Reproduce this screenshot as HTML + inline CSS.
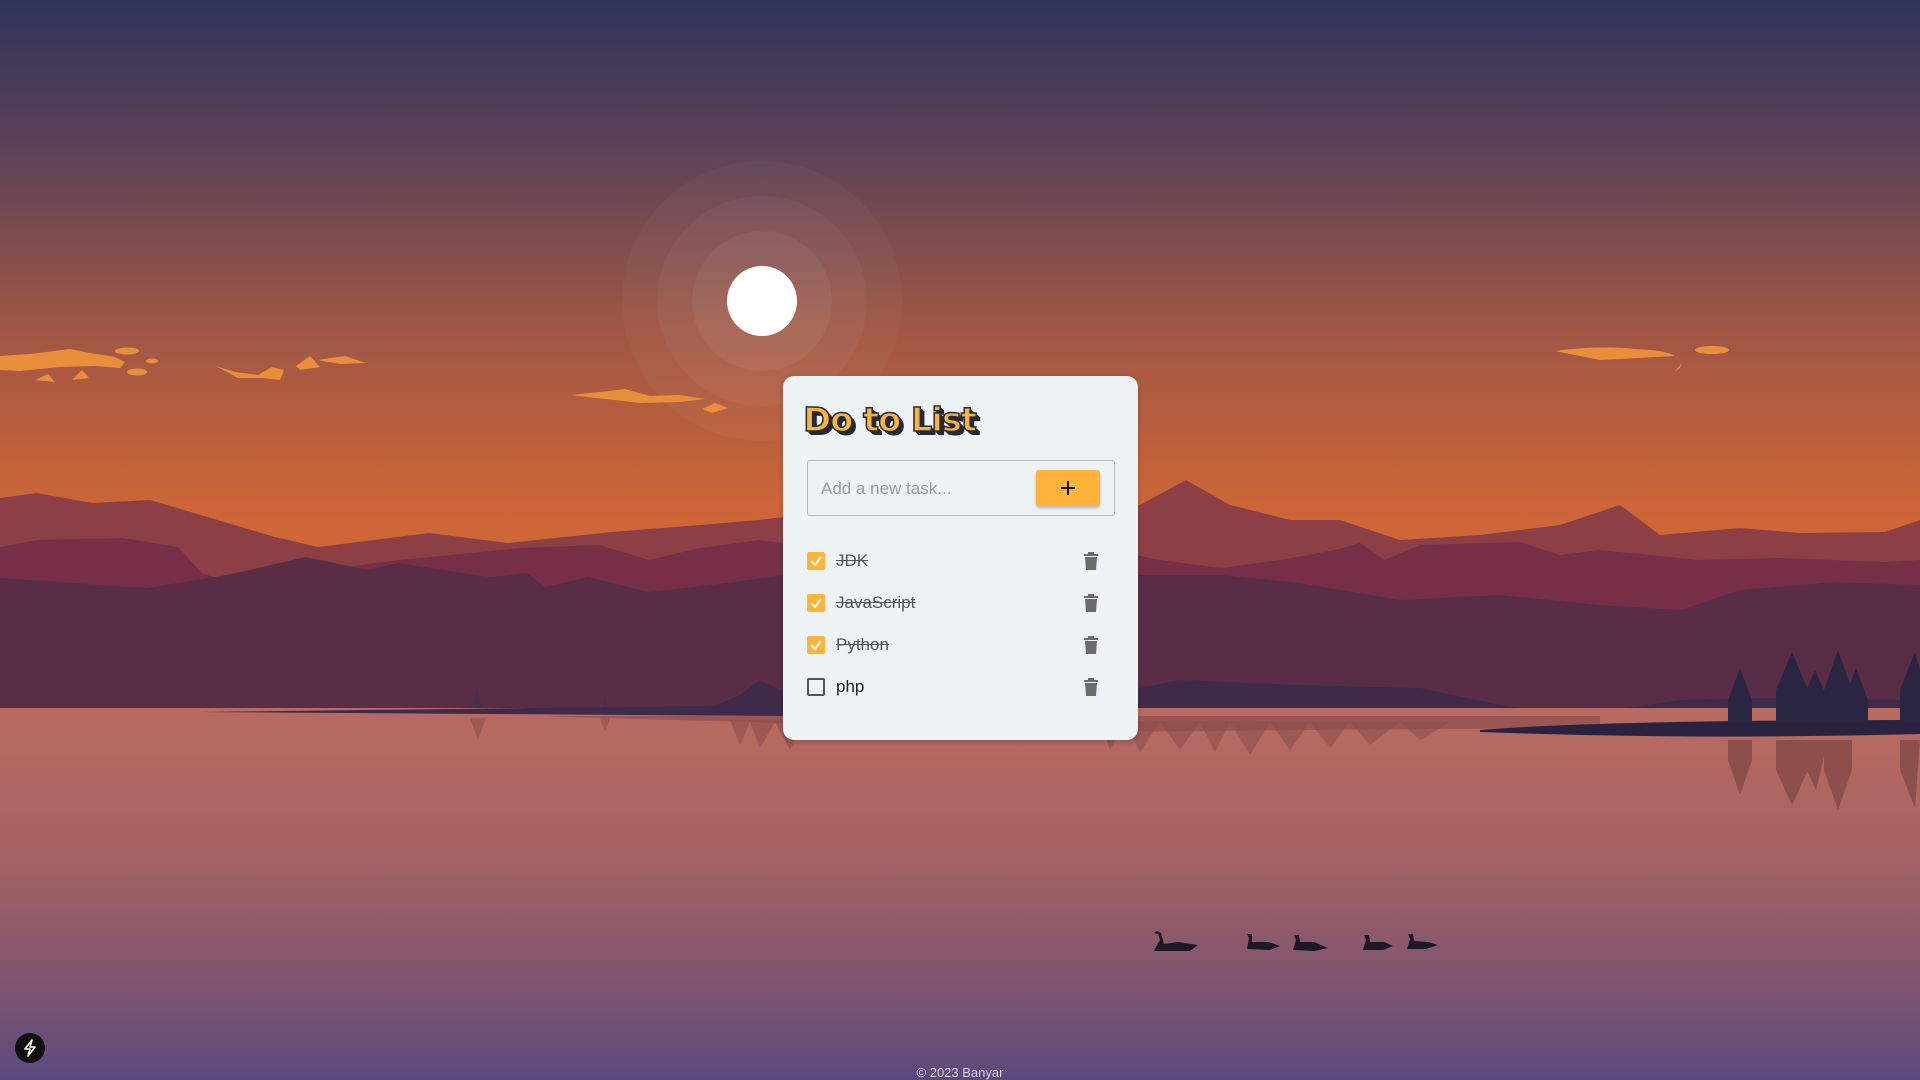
<!DOCTYPE html>
<html><head><meta charset="utf-8"><style>
html,body{margin:0;padding:0;width:1920px;height:1080px;overflow:hidden;font-family:"Liberation Sans",Arial,sans-serif}
svg.bg{position:absolute;left:0;top:0}
.card{position:absolute;left:783px;top:376px;width:355px;height:364px;background:#edf2f5;border-radius:11px;box-shadow:0 2px 6px rgba(0,0,0,.2)}
.title{position:absolute;left:22px;top:24px;font-family:"DejaVu Sans","Liberation Sans",sans-serif;font-weight:bold;font-size:33px;letter-spacing:-1px;color:#f8b43c;-webkit-text-stroke:1.5px #2a2a35;text-shadow:2px 2px 0 #24283a,3px 3px 0 #24283a,4px 4px 0 #24283a;transform:scaleX(1.02)}
.inp{position:absolute;left:24px;top:84px;width:308px;height:56px;border:1px solid #b5b9bc;border-radius:3px;box-sizing:border-box}
.ph{position:absolute;left:13px;top:18px;font-size:17px;color:#9a9a9a}
.btn{position:absolute;left:228px;top:9px;width:64px;height:36px;background:#ffb33b;border-radius:3px;box-shadow:0 2px 3px rgba(0,0,0,.25)}
.row{position:absolute;left:24px;height:24px;width:310px}
.cb{position:absolute;left:0;top:3px;width:18px;height:18px;border-radius:2px;background:#ffb33b}
.cb.off{background:none;border:2px solid #555;box-sizing:border-box}
.tx{position:absolute;left:29px;top:2px;font-size:17px;color:#555;text-decoration:line-through}
.tx.on{color:#222;text-decoration:none}
.tr{position:absolute;left:276px;top:2px}
.foot{position:absolute;left:0;width:1920px;top:1065px;text-align:center;font-size:13px;color:#d8d0dc}
.bolt{position:absolute;left:15px;top:1033px;width:30px;height:30px;border-radius:50%;background:#111}
</style></head><body>
<svg class="bg" width="1920" height="1080" viewBox="0 0 1920 1080">
<defs>
<linearGradient id="sky" x1="0" y1="0" x2="0" y2="1">
<stop offset="0" stop-color="#30345a"/><stop offset="0.2" stop-color="#5a4258"/><stop offset="0.45" stop-color="#9e5645"/><stop offset="0.7" stop-color="#cc6538"/><stop offset="1" stop-color="#e06c35"/></linearGradient>
<linearGradient id="wat" x1="0" y1="0" x2="0" y2="1">
<stop offset="0" stop-color="#b96b61"/><stop offset="0.4" stop-color="#a56262"/><stop offset="0.75" stop-color="#7d5470"/><stop offset="1" stop-color="#5a4a7c"/></linearGradient>
</defs>
<rect width="1920" height="720" fill="url(#sky)"/>
<circle cx="762" cy="301" r="140" fill="#fff" opacity="0.03"/>
<circle cx="762" cy="301" r="105" fill="#fff" opacity="0.04"/>
<circle cx="762" cy="301" r="70" fill="#fff" opacity="0.05"/>
<circle cx="762" cy="301" r="35" fill="#fff"/>
<g fill="#e98f3c">
<path d="M0 356 L30 354 L70 349 L90 353 L115 357 L125 362 L120 368 L95 366 L60 367 L20 371 L0 370Z"/>
<ellipse cx="127" cy="351" rx="12" ry="3.5"/><ellipse cx="152" cy="361" rx="6" ry="2.5"/><ellipse cx="137" cy="372" rx="10" ry="3.5"/>
<path d="M35 380 L48 374 L55 382Z"/><path d="M72 380 L82 370 L89 378Z"/>
<path d="M216 366 L235 372 L258 375 L272 367 L284 370 L280 380 L262 378 L238 378Z"/>
<path d="M296 366 L310 356 L320 367 L300 370Z"/><path d="M317 360 L345 356 L366 363 L340 364Z"/>
<path d="M570 395 L610 391 L625 389 L650 396 L680 395 L705 399 L680 402 L640 403Z"/>
<path d="M702 409 L715 403 L728 408 L712 413Z"/>
<path d="M1555 351 Q1600 345 1635 349 Q1665 350 1675 356 L1600 360Z"/>
<path d="M1675 371 L1682 363 L1680 368Z"/>
<ellipse cx="1712" cy="350" rx="17" ry="4"/>
</g>
<path fill="#8c4045" d="M0 498 L37 493 L92 503 L150 500 L275 537 L318 547 L429 533 L508 543 L612 532 L700 525 L759 520 L800 515 L1000 520 L1140 505 L1186 480 L1230 505 L1290 520 L1340 520 L1400 540 L1480 535 L1560 525 L1620 505 L1660 535 L1740 528 L1800 533 L1885 532 L1920 520 L1920 720 L0 720Z"/>
<path fill="#772f48" d="M0 547 L37 540 L122 538 L178 547 L202 573 L227 582 L400 560 L520 548 L600 545 L649 560 L700 548 L759 540 L800 545 L900 555 L1000 550 L1100 548 L1160 560 L1222 568 L1280 560 L1335 550 L1360 543 L1385 560 L1420 545 L1520 542 L1560 555 L1600 550 L1700 560 L1780 558 L1885 562 L1920 560 L1920 720 L0 720Z"/>
<path fill="#5a2d47" d="M0 578 L147 588 L227 575 L306 557 L367 570 L398 563 L490 577 L527 573 L545 587 L588 577 L649 592 L735 582 L783 575 L1140 575 L1222 575 L1300 583 L1400 600 L1500 595 L1600 605 L1681 610 L1740 590 L1834 582 L1920 585 L1920 720 L0 720Z"/>
<path fill="#3f2a4a" d="M700 712 L740 695 L760 680 L780 690 L1130 690 L1180 680 L1300 685 L1420 688 L1500 705 L1560 715 L1600 712 L1680 700 L1760 698 L1920 700 L1920 716 L700 716Z"/>
<g fill="#46304e">
<path d="M470 712 L477 690 L484 712Z"/>
<path d="M600 712 L605 698 L610 712Z"/>
</g>
<rect y="708" width="1920" height="372" fill="url(#wat)"/>
<path fill="#3f2a4a" d="M200 712 L780 705 L900 712 L780 716 Z"/>
<path fill="#8d4f4c" opacity="0.7" d="M540 716 L1600 716 L1600 728 L1300 730 L1000 733 L750 722 L600 718Z"/>
<g fill="#8d4f4c" opacity="0.6">
<path d="M470 718 L478 740 L486 718Z"/><path d="M600 718 L605 732 L610 718Z"/>
<path d="M730 720 L740 745 L750 722 L760 748 L775 722 L790 750 L805 722 L1100 722 L1110 750 L1125 722 L1140 752 L1160 722 L1180 750 L1200 722 L1215 752 L1230 722 L1250 755 L1270 722 L1290 750 L1310 722 L1330 748 L1350 722 L1370 745 L1400 722 L1420 740 L1450 722Z"/>
</g>
<path fill="#2a2340" d="M1480 730 Q1600 720 1920 720 L1920 734 Q1700 740 1480 732Z"/>
<g fill="#2a2540">
<path d="M1740 668 L1728 700 L1728 722 L1752 722 L1752 700Z"/>
<path d="M1792 652 L1776 690 L1776 722 L1808 722 L1808 690Z"/>
<path d="M1815 670 L1802 700 L1802 722 L1828 722 L1828 700Z"/>
<path d="M1838 650 L1824 690 L1824 722 L1852 722 L1852 690Z"/>
<path d="M1856 668 L1844 700 L1844 722 L1868 722 L1868 700Z"/>
<path d="M1915 652 L1900 690 L1900 722 L1920 722 L1920 670Z"/>
</g>
<g fill="#8d4f4c">
<path d="M1740 795 L1728 760 L1728 740 L1752 740 L1752 760Z"/>
<path d="M1792 805 L1776 770 L1776 740 L1808 740 L1808 770Z"/>
<path d="M1838 810 L1824 770 L1824 740 L1852 740 L1852 770Z"/>
<path d="M1816 790 L1802 760 L1802 740 L1828 740Z"/>
<path d="M1915 808 L1900 770 L1900 740 L1920 740Z"/>
</g>
<g fill="#1c1826">
<path d="M1154 951 L1160 940 L1158 934 L1154 933 L1157 931 L1161 933 L1164 944 L1178 942 L1198 945 L1190 951Z"/>
<path d="M1247 949 L1249 938 L1247 934 L1252 934 L1252 942 L1268 942 L1280 946 L1270 950Z"/>
<path d="M1293 950 L1296 940 L1294 935 L1299 935 L1300 942 L1314 942 L1328 948 L1314 951Z"/>
<path d="M1363 950 L1366 940 L1364 935 L1369 935 L1370 942 L1384 942 L1393 946 L1383 950Z"/>
<path d="M1407 949 L1410 939 L1408 934 L1413 934 L1414 941 L1428 942 L1438 945 L1426 949Z"/>
</g>
</svg>

<div class="card">
<div class="title">Do to List</div>
<div class="inp"><span class="ph">Add a new task...</span>
<div class="btn"><svg width="64" height="36"><path d="M32 11V25M25 18H39" stroke="#111" stroke-width="2"/></svg></div></div>
<div class="row" style="top:173px"><div class="cb"><svg width="18" height="18"><path d="M4 9L8 13L14 5" stroke="#fff" stroke-width="2" fill="none"/></svg></div><span class="tx">JDK</span><svg class="tr" width="16" height="20"><path d="M5 1H11V3H15V5H1V3H5Z M2 6H14L13 19H3Z" fill="#6b6b6b"/></svg></div>
<div class="row" style="top:215px"><div class="cb"><svg width="18" height="18"><path d="M4 9L8 13L14 5" stroke="#fff" stroke-width="2" fill="none"/></svg></div><span class="tx">JavaScript</span><svg class="tr" width="16" height="20"><path d="M5 1H11V3H15V5H1V3H5Z M2 6H14L13 19H3Z" fill="#6b6b6b"/></svg></div>
<div class="row" style="top:257px"><div class="cb"><svg width="18" height="18"><path d="M4 9L8 13L14 5" stroke="#fff" stroke-width="2" fill="none"/></svg></div><span class="tx">Python</span><svg class="tr" width="16" height="20"><path d="M5 1H11V3H15V5H1V3H5Z M2 6H14L13 19H3Z" fill="#6b6b6b"/></svg></div>
<div class="row" style="top:299px"><div class="cb off"></div><span class="tx on">php</span><svg class="tr" width="16" height="20"><path d="M5 1H11V3H15V5H1V3H5Z M2 6H14L13 19H3Z" fill="#6b6b6b"/></svg></div>
</div>
<div class="bolt"><svg width="30" height="30"><path d="M17 7L10 16H15L13 23L20 14H15Z" fill="none" stroke="#fff" stroke-width="1.6" stroke-linejoin="round"/></svg></div>
<div class="foot">© 2023 Banyar</div>
</body></html>
